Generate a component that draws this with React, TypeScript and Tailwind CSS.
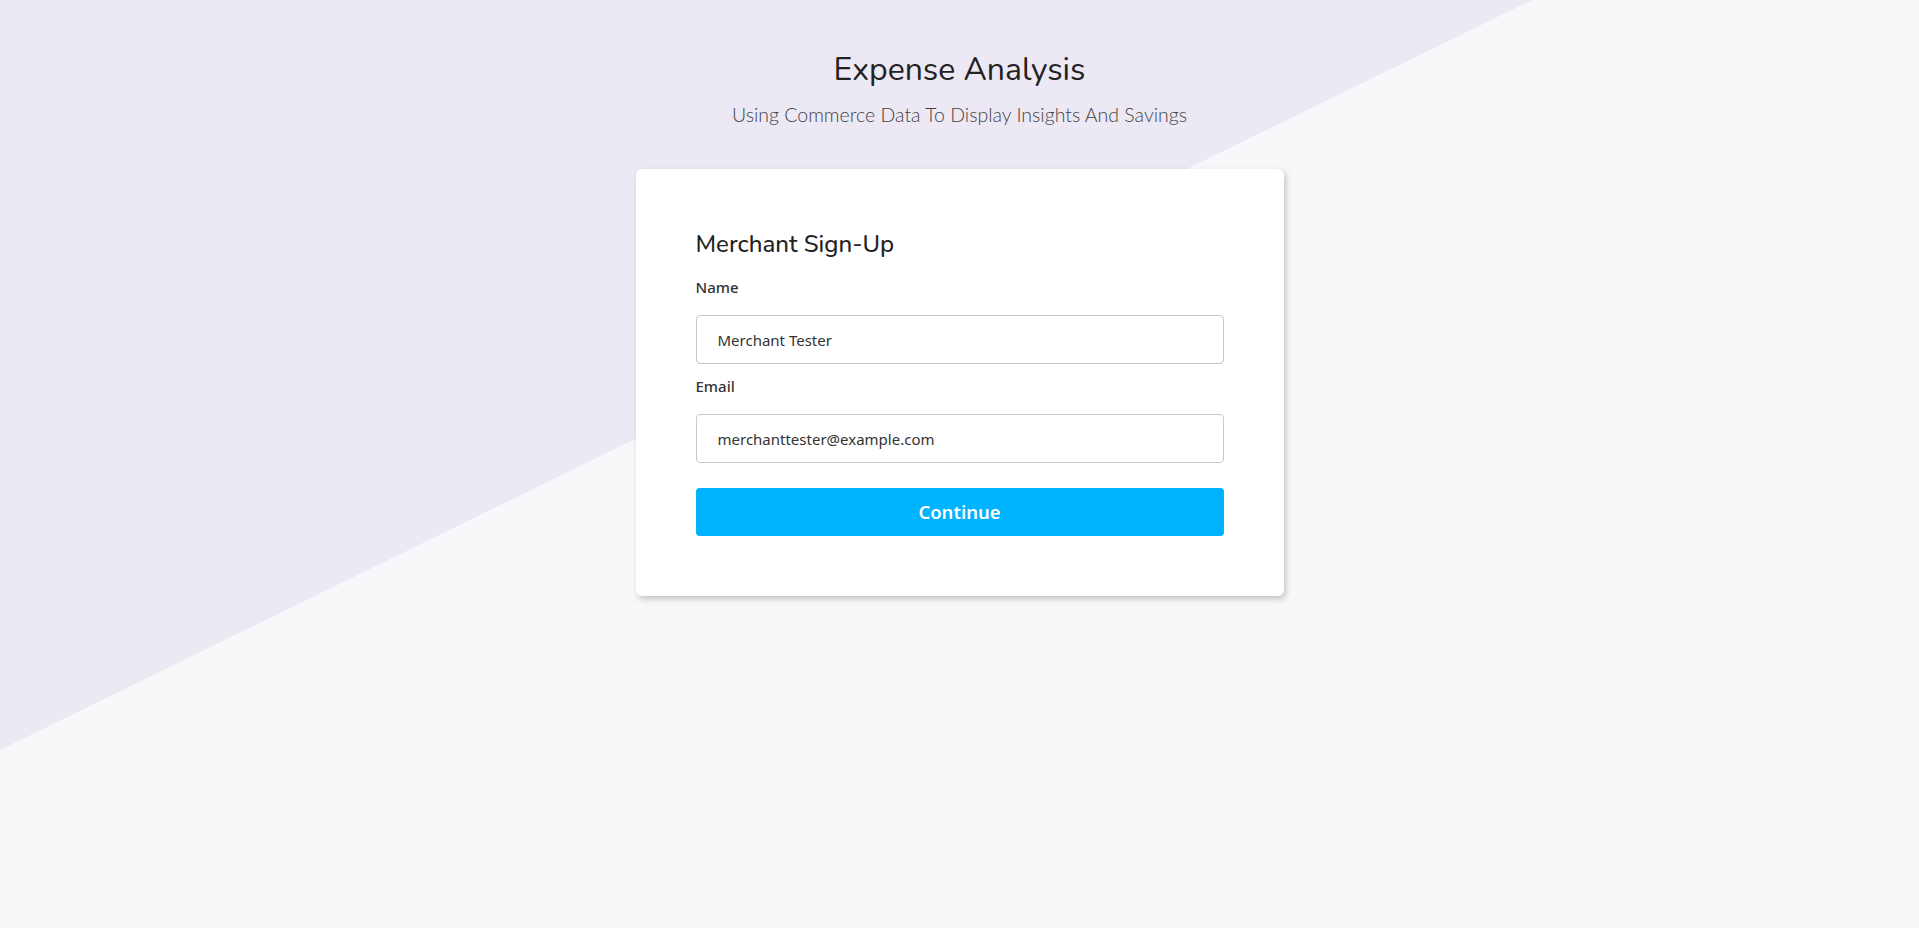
import React from 'react';

const App: React.FC = () => (
  <div className="relative min-h-[928px] w-full overflow-hidden bg-[#f7f8fa]">
    <div className="absolute inset-0 bg-[#ece8f4] [clip-path:polygon(0_0,1532px_0,0_750px)]" />
    <div className="relative flex flex-col items-center">
      <h1 className="mt-[50px] text-[32px] leading-[40px] text-[#222] font-['Nunito','Lato',sans-serif]">
        Expense Analysis
      </h1>
      <p className="mt-[11px] text-[19.5px] leading-[28px] font-light text-[#444] font-['Lato',sans-serif]">
        Using Commerce Data To Display Insights And Savings
      </p>

      <div className="mt-[40px] w-[648px] rounded-[6px] bg-white p-[60px] shadow-[2px_3px_6px_rgba(0,0,0,0.22)]">
        <h2 className="text-[24px] leading-[30px] font-medium text-[#222] font-['Nunito','Lato',sans-serif]">
          Merchant Sign-Up
        </h2>

        <label className="mt-[18px] block text-[15px] leading-[20px] font-medium text-[#333] font-['Noto_Sans',sans-serif]">
          Name
        </label>
        <input
          readOnly
          value="Merchant Tester"
          className="mt-[18px] block h-[49px] w-full rounded-[4px] border border-[#c8c8c8] bg-white px-[21px] text-[15px] text-[#333] outline-none font-['Noto_Sans',sans-serif]"
        />

        <label className="mt-[12px] block text-[15px] leading-[20px] font-medium text-[#333] font-['Noto_Sans',sans-serif]">
          Email
        </label>
        <input
          readOnly
          value="merchanttester@example.com"
          className="mt-[18px] block h-[49px] w-full rounded-[4px] border border-[#c8c8c8] bg-white px-[21px] text-[15px] text-[#333] outline-none font-['Noto_Sans',sans-serif]"
        />

        <button className="mt-[25px] block h-[48px] w-full rounded-[4px] bg-[#00b3ff] text-[18.5px] font-semibold text-white font-['Noto_Sans',sans-serif]">
          Continue
        </button>
      </div>
    </div>
  </div>
);

export default App;
